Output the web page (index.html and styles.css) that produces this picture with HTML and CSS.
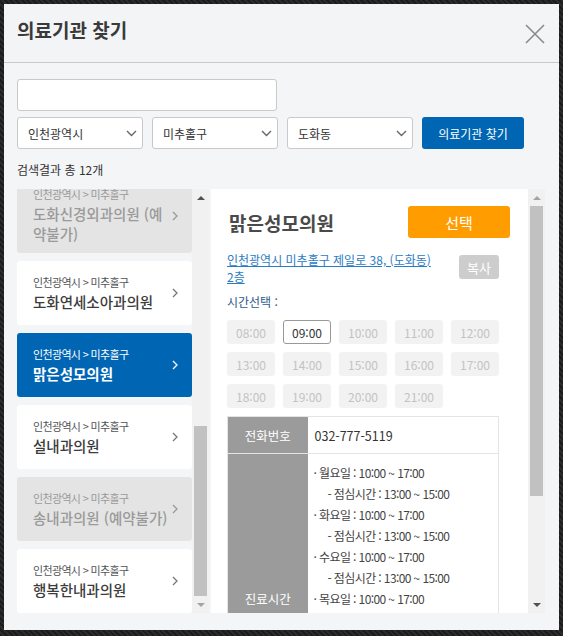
FILE: index.html
```html
<!DOCTYPE html>
<html lang="ko">
<head>
<meta charset="utf-8">
<title>의료기관 찾기</title>
<link rel="stylesheet" href="styles.css">
</head>
<body>
<div class="modal">
  <header class="modal-head">
    <h1 class="modal-title">의료기관 찾기</h1>
    <button class="close" type="button" aria-label="닫기">
      <svg width="20" height="20" viewBox="0 0 20 20"><path d="M1 1L19 19M19 1L1 19" stroke="#8a8a8a" stroke-width="1.6" fill="none"/></svg>
    </button>
  </header>
  <div class="modal-body">
    <input class="keyword" type="text">
    <div class="filters">
      <div class="select"><span>인천광역시</span><svg width="11" height="7" viewBox="0 0 11 7"><path d="M1 1L5.5 5.5L10 1" stroke="#666" stroke-width="1.4" fill="none"/></svg></div>
      <div class="select"><span>미추홀구</span><svg width="11" height="7" viewBox="0 0 11 7"><path d="M1 1L5.5 5.5L10 1" stroke="#666" stroke-width="1.4" fill="none"/></svg></div>
      <div class="select"><span>도화동</span><svg width="11" height="7" viewBox="0 0 11 7"><path d="M1 1L5.5 5.5L10 1" stroke="#666" stroke-width="1.4" fill="none"/></svg></div>
      <button class="btn-search" type="button">의료기관 찾기</button>
    </div>
    <p class="count">검색결과 총 12개</p>
    <div class="results">
      <div class="list-col">
        <ul class="list">
          <li class="card disabled"><div class="card-text"><span class="region">인천광역시 &gt; 미추홀구</span><span class="name">도화신경외과의원 (예약불가)</span></div><svg class="chev" width="6" height="10" viewBox="0 0 6 10"><path d="M1 1L5 5L1 9" stroke="currentColor" stroke-width="1.3" fill="none"/></svg></li>
          <li class="card"><div class="card-text"><span class="region">인천광역시 &gt; 미추홀구</span><span class="name">도화연세소아과의원</span></div><svg class="chev" width="6" height="10" viewBox="0 0 6 10"><path d="M1 1L5 5L1 9" stroke="currentColor" stroke-width="1.3" fill="none"/></svg></li>
          <li class="card active"><div class="card-text"><span class="region">인천광역시 &gt; 미추홀구</span><span class="name">맑은성모의원</span></div><svg class="chev" width="6" height="10" viewBox="0 0 6 10"><path d="M1 1L5 5L1 9" stroke="currentColor" stroke-width="1.3" fill="none"/></svg></li>
          <li class="card"><div class="card-text"><span class="region">인천광역시 &gt; 미추홀구</span><span class="name">설내과의원</span></div><svg class="chev" width="6" height="10" viewBox="0 0 6 10"><path d="M1 1L5 5L1 9" stroke="currentColor" stroke-width="1.3" fill="none"/></svg></li>
          <li class="card disabled"><div class="card-text"><span class="region">인천광역시 &gt; 미추홀구</span><span class="name">송내과의원 (예약불가)</span></div><svg class="chev" width="6" height="10" viewBox="0 0 6 10"><path d="M1 1L5 5L1 9" stroke="currentColor" stroke-width="1.3" fill="none"/></svg></li>
          <li class="card"><div class="card-text"><span class="region">인천광역시 &gt; 미추홀구</span><span class="name">행복한내과의원</span></div><svg class="chev" width="6" height="10" viewBox="0 0 6 10"><path d="M1 1L5 5L1 9" stroke="currentColor" stroke-width="1.3" fill="none"/></svg></li>
        </ul>
        <div class="scrollbar">
          <div class="sb-arrow dark"><svg width="8" height="4" viewBox="0 0 8 4"><path d="M0 4L4 0L8 4Z"/></svg></div>
          <div class="sb-track end"><div class="thumb thumb-list"></div></div>
          <div class="sb-arrow"><svg width="8" height="4" viewBox="0 0 8 4"><path d="M0 0L8 0L4 4Z"/></svg></div>
        </div>
      </div>
      <div class="detail-col">
        <div class="detail">
          <div class="detail-head">
            <h2 class="detail-title">맑은성모의원</h2>
            <button class="btn-select" type="button">선택</button>
          </div>
          <div class="addr-row">
            <a class="addr" href="#">인천광역시 미추홀구 제일로 38, (도화동) 2층</a>
            <button class="btn-copy" type="button">복사</button>
          </div>
          <p class="time-label">시간선택 :</p>
          <div class="slots">
            <span class="slot">08:00</span>
            <span class="slot on">09:00</span>
            <span class="slot">10:00</span>
            <span class="slot">11:00</span>
            <span class="slot">12:00</span>
            <span class="slot">13:00</span>
            <span class="slot">14:00</span>
            <span class="slot">15:00</span>
            <span class="slot">16:00</span>
            <span class="slot">17:00</span>
            <span class="slot">18:00</span>
            <span class="slot">19:00</span>
            <span class="slot">20:00</span>
            <span class="slot">21:00</span>
          </div>
          <table class="info">
            <tr class="tel-row"><th>전화번호</th><td class="tel">032-777-5119</td></tr>
            <tr>
              <th>진료시간</th>
              <td class="hours">
                <div>· 월요일 : 10:00 ~ 17:00</div>
                <div class="sub">- 점심시간 : 13:00 ~ 15:00</div>
                <div>· 화요일 : 10:00 ~ 17:00</div>
                <div class="sub">- 점심시간 : 13:00 ~ 15:00</div>
                <div>· 수요일 : 10:00 ~ 17:00</div>
                <div class="sub">- 점심시간 : 13:00 ~ 15:00</div>
                <div>· 목요일 : 10:00 ~ 17:00</div>
                <div class="sub">- 점심시간 : 13:00 ~ 15:00</div>
                <div>· 금요일 : 10:00 ~ 17:00</div>
                <div class="sub">- 점심시간 : 13:00 ~ 15:00</div>
                <div>· 토요일 : 10:00 ~ 13:00</div>
                <div>· 일요일 : 휴진</div>
                <div>· 공휴일 : 휴진</div>
              </td>
            </tr>
          </table>
        </div>
        <div class="scrollbar">
          <div class="sb-arrow"><svg width="8" height="4" viewBox="0 0 8 4"><path d="M0 4L4 0L8 4Z"/></svg></div>
          <div class="sb-track"><div class="thumb thumb-detail"></div></div>
          <div class="sb-arrow dark"><svg width="8" height="4" viewBox="0 0 8 4"><path d="M0 0L8 0L4 4Z"/></svg></div>
        </div>
      </div>
    </div>
  </div>
</div>
</body>
</html>
```
FILE: styles.css
```css
* { box-sizing: border-box; }
html, body { margin: 0; padding: 0; }
body {
  width: 563px;
  height: 636px;
  overflow: hidden;
  padding: 4px;
  background: repeating-linear-gradient(45deg, #1c1c1c 0 2px, #2b2b2b 2px 4px);
  font-family: "Noto Sans CJK KR", "Noto Sans", sans-serif;
  color: #333;
}
.modal {
  width: 555px;
  height: 626px;
  background: #f4f5f7;
  display: flex;
  flex-direction: column;
}
.modal-head {
  height: 59px;
  flex: none;
  display: flex;
  align-items: center;
  justify-content: space-between;
  padding: 0 14px 6px 13px;
  border-bottom: 1px solid #c9c9c9;
  background: #f3f4f6;
}
.modal-title {
  margin: 0;
  font-size: 19px;
  font-weight: 700;
  color: #3a3a3a;
  line-height: 24px;
}
.close {
  border: 0;
  background: none;
  padding: 0;
  margin-top: 8px;
  width: 20px;
  height: 20px;
  display: flex;
}
.modal-body {
  flex: 1;
  display: flex;
  flex-direction: column;
  padding: 16px 14px 17px 13px;
  min-height: 0;
}
.keyword {
  display: block;
  width: 260px;
  height: 32px;
  margin: 0;
  border: 1px solid #c9c9c9;
  border-radius: 3px;
  background: #fff;
}
.filters {
  display: flex;
  gap: 9px;
  margin-top: 6px;
  height: 32px;
}
.select {
  width: 126px;
  height: 32px;
  display: flex;
  align-items: center;
  justify-content: space-between;
  padding: 0 5px 0 10px;
  border: 1px solid #c9c9c9;
  border-radius: 3px;
  background: #fff;
  font-size: 12px;
  color: #333;
}
.btn-search {
  width: 102px;
  height: 32px;
  border: 0;
  border-radius: 3px;
  background: #0066b3;
  color: #fff;
  font-family: inherit;
  font-size: 12px;
  padding: 0;
}
.count {
  margin: 12px 0 0;
  font-size: 12px;
  line-height: 17px;
  color: #333;
}
.results {
  margin-top: 11px;
  flex: 1;
  min-height: 0;
  display: flex;
  gap: 2px;
}
.list-col {
  width: 192px;
  display: flex;
}
.list {
  list-style: none;
  margin: 0;
  padding: 0;
  width: 175px;
  display: flex;
  flex-direction: column;
  justify-content: flex-end;
  gap: 8px;
  overflow: hidden;
}
.card {
  flex: none;
  min-height: 64px;
  display: flex;
  align-items: center;
  gap: 3px;
  padding: 9px 14px 9px 16px;
  border-radius: 3px;
  background: #fff;
  color: #777;
}
.card-text {
  flex: 1;
  display: flex;
  flex-direction: column;
}
.region {
  font-size: 11px;
  line-height: 15px;
  letter-spacing: -0.06em;
  color: #555;
}
.name {
  margin-top: 2px;
  font-size: 14.5px;
  line-height: 20px;
  font-weight: 500;
  color: #3c3c3c;
}
.chev { flex: none; }
.card.disabled { background: #e4e4e4; color: #999; }
.card.disabled .region { color: #9a9a9a; }
.card.disabled .name { color: #9a9a9a; }
.card.active { background: #0066b3; color: #fff; }
.card.active .region, .card.active .name { color: #fff; }
.card.active .name { font-weight: 700; }

.scrollbar {
  width: 17px;
  flex: none;
  display: flex;
  flex-direction: column;
  background: #f1f1f1;
}
.sb-arrow {
  height: 17px;
  flex: none;
  display: flex;
  align-items: center;
  justify-content: center;
  fill: #a3a3a3;
}
.sb-arrow.dark { fill: #505050; }
.sb-track {
  flex: 1;
  display: flex;
  flex-direction: column;
  padding: 0 2px;
}
.sb-track.end { justify-content: flex-end; }
.thumb { background: #c1c1c1; }
.thumb-list { height: 170px; }
.thumb-detail { height: 290px; }

.detail-col {
  flex: 1;
  display: flex;
}
.detail {
  flex: 1;
  background: #fff;
  overflow: hidden;
  padding: 17px 18px 0 16px;
}
.detail-head {
  display: flex;
  justify-content: space-between;
  align-items: center;
  height: 32px;
}
.detail-title {
  margin: 0;
  padding-left: 2px;
  font-size: 19px;
  font-weight: 700;
  color: #4a4a4a;
}
.btn-select {
  width: 102px;
  height: 32px;
  border: 0;
  border-radius: 3px;
  background: #ff9c00;
  color: #fff;
  font-family: inherit;
  font-size: 15px;
  padding: 0;
}
.addr-row {
  width: 272px;
  margin-top: 13px;
  display: flex;
  justify-content: space-between;
  align-items: flex-start;
}
.addr {
  width: 206px;
  font-size: 12px;
  line-height: 17px;
  color: #2a7cc4;
  text-decoration: underline;
}
.btn-copy {
  width: 40px;
  height: 24px;
  margin-top: 4px;
  border: 0;
  border-radius: 3px;
  background: #cdcdcd;
  color: #fff;
  font-family: inherit;
  font-size: 13px;
  padding: 0;
}
.time-label {
  margin: 8px 0 0;
  font-size: 12px;
  line-height: 17px;
  color: #2d5b8a;
}
.slots {
  margin-top: 10px;
  display: grid;
  grid-template-columns: repeat(5, 48px);
  grid-auto-rows: 24px;
  gap: 8px;
}
.slot {
  display: flex;
  align-items: center;
  justify-content: center;
  background: #f2f2f2;
  border-radius: 3px;
  font-size: 12px;
  color: #c3c3c3;
}
.slot.on {
  background: #fff;
  border: 1px solid #999;
  color: #333;
}
.info {
  margin-top: 8px;
  width: 272px;
  border-collapse: collapse;
  border: 1px solid #e4e4e4;
}
.info th {
  width: 80px;
  background: #9b9b9b;
  color: #fff;
  font-size: 12.5px;
  font-weight: 400;
  text-align: center;
  border-bottom: 1px solid #e4e4e4;
  padding: 0;
}
.info td {
  border-bottom: 1px solid #e4e4e4;
  padding: 0 8px 0 7px;
  color: #333;
}
.tel-row { height: 37px; }
.tel { font-size: 12.5px; }
.info td.hours {
  padding: 8px 8px 8px 6px;
  font-size: 12px;
  line-height: 21px;
  letter-spacing: -0.05em;
  color: #444;
}
.hours .sub { padding-left: 14px; }
```
